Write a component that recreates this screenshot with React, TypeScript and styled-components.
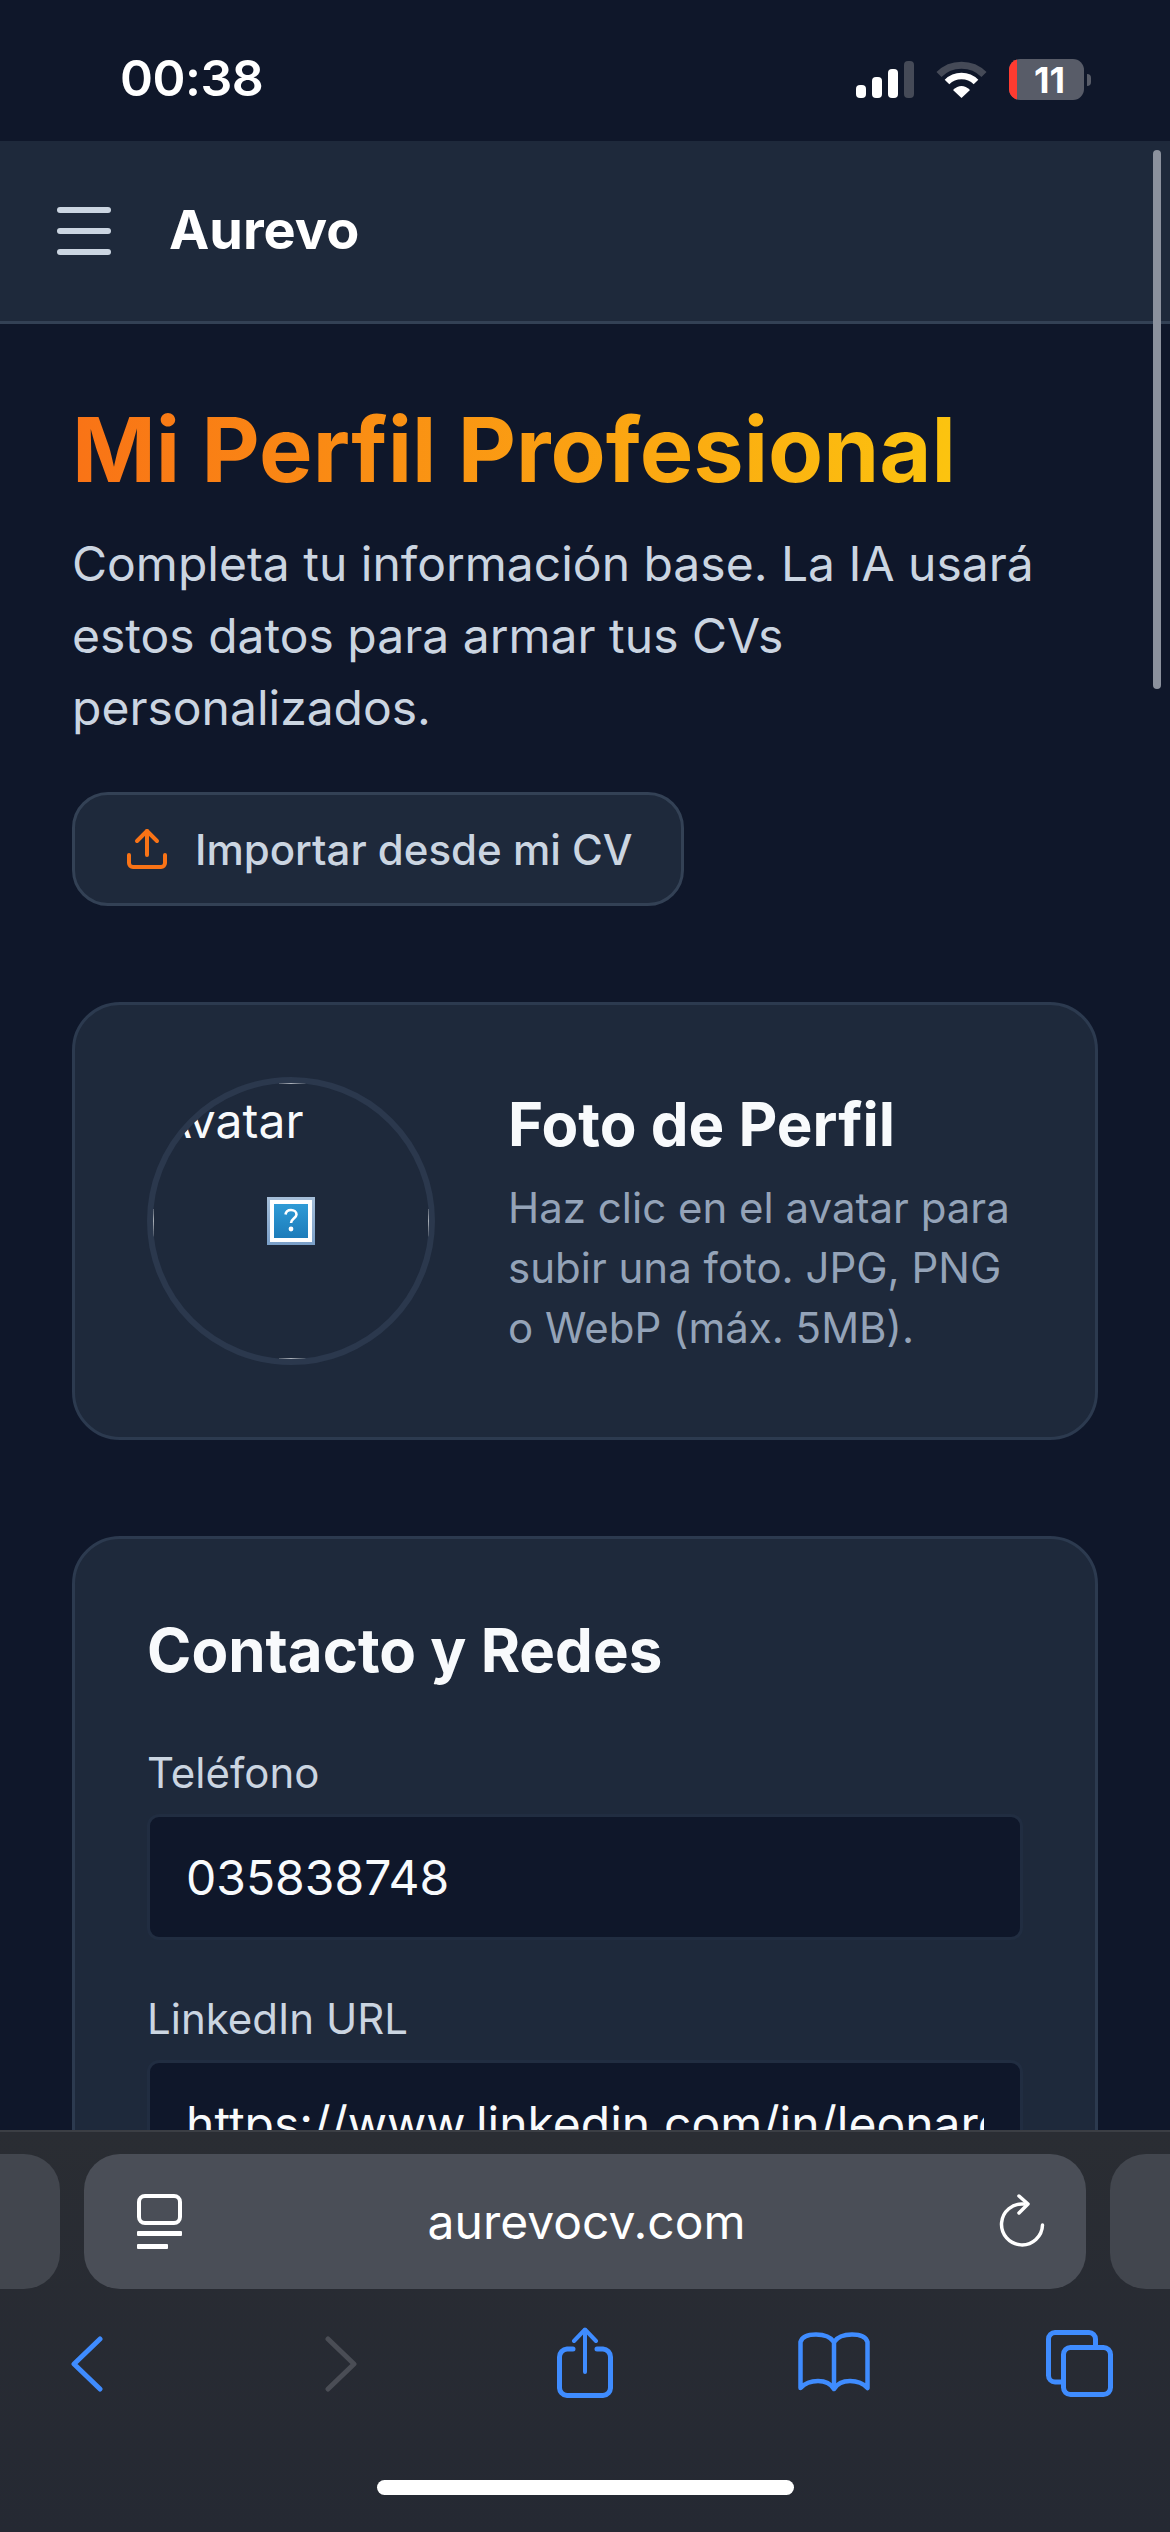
import React from 'react';
import styled, { createGlobalStyle } from 'styled-components';
import { Upload } from 'lucide-react';

const GlobalStyle = createGlobalStyle`
  * {
    box-sizing: border-box;
  }

  html,
  body {
    margin: 0;
    padding: 0;
    background: #0f172a;
  }

  body {
    font-family: Inter, "Noto Sans", sans-serif;
  }
`;

const Screen = styled.div`
  position: relative;
  width: 1170px;
  height: 2532px;
  display: flex;
  flex-direction: column;
  overflow: hidden;
  background: #0f172a;
`;

const StatusBar = styled.div`
  flex: 0 0 141px;
  display: flex;
  align-items: flex-start;
  justify-content: space-between;
  padding: 50px 79px 0 120px;
`;

const Clock = styled.span`
  color: #ffffff;
  font-size: 50px;
  font-weight: 600;
  line-height: 56px;
  letter-spacing: -0.5px;
`;

const StatusIcons = styled.div`
  display: flex;
  align-items: center;
  gap: 22px;
  padding-top: 9px;
`;

const Battery = styled.div`
  position: relative;
  width: 75px;
  height: 41px;
  display: flex;
  align-items: center;
  justify-content: center;
  border-radius: 11px;
  overflow: hidden;
  background: #585c68;
  color: #ffffff;
  font-size: 36px;
  font-weight: 700;
  padding-left: 6px;
`;

const BatteryLevel = styled.span`
  position: absolute;
  left: 0;
  top: 0;
  bottom: 0;
  width: 8px;
  background: #ff3b30;
`;

const BatteryGroup = styled.div`
  display: flex;
  align-items: center;
  gap: 3px;
`;

const BatteryNub = styled.span`
  width: 4px;
  height: 12px;
  border-radius: 0 6px 6px 0;
  background: #585c68;
`;

const Header = styled.header`
  flex: 0 0 183px;
  display: flex;
  align-items: center;
  gap: 58px;
  padding: 0 57px;
  background: #1e293b;
  border-bottom: 3px solid #334155;
`;

const MenuButton = styled.div`
  width: 54px;
  display: flex;
  flex-direction: column;
  gap: 15px;
`;

const MenuBar = styled.span`
  height: 6px;
  border-radius: 3px;
  background: #cbd5e1;
`;

const Brand = styled.span`
  color: #ffffff;
  font-size: 54px;
  font-weight: 700;
  line-height: 60px;
  margin-bottom: 2px;
`;

const Main = styled.main`
  flex: 1;
  min-height: 0;
  overflow: hidden;
  padding: 72px 72px 0;
`;

const Title = styled.h1`
  display: inline-block;
  margin: 0 0 24px;
  font-size: 90px;
  font-weight: 700;
  line-height: 108px;
  background: linear-gradient(90deg, #f97316, #fcc40f);
  -webkit-background-clip: text;
  background-clip: text;
  -webkit-text-fill-color: transparent;
`;

const Intro = styled.p`
  margin: 0 0 48px;
  color: #cbd5e1;
  font-size: 48px;
  line-height: 72px;
`;

const ImportButton = styled.button`
  height: 114px;
  display: flex;
  align-items: center;
  gap: 24px;
  margin-bottom: 96px;
  padding: 0 48px;
  border: 3px solid #334155;
  border-radius: 36px;
  background: #1e293b;
  color: #cbd5e1;
  font-family: inherit;
  font-size: 42px;
  font-weight: 500;
  svg {
    color: #f97316;
  }
`;

const Card = styled.section`
  margin-bottom: 96px;
  padding: 72px;
  border: 3px solid #2c3a4f;
  border-radius: 48px;
  background: #1e293b;
`;

const PhotoRow = styled.div`
  display: flex;
  align-items: center;
  gap: 73px;
`;

const Avatar = styled.div`
  position: relative;
  flex: 0 0 288px;
  height: 288px;
  display: flex;
  align-items: center;
  justify-content: center;
  border: 6px solid #2b384d;
  border-radius: 50%;
  overflow: hidden;
`;

const AvatarAlt = styled.span`
  position: absolute;
  left: 6px;
  top: 2px;
  color: #f8fafc;
  font-size: 48px;
  line-height: 72px;
`;

const Tick = styled.span<{ $side: 'top' | 'bottom' | 'left' | 'right' }>`
  position: absolute;
  background: #a9afb8;
  ${({ $side }) =>
    $side === 'top' || $side === 'bottom'
      ? `left: 126px; width: 30px; height: 1px; ${$side}: 0;`
      : `top: 126px; height: 30px; width: 1px; ${$side}: 0;`}
`;

const PhotoText = styled.div`
  flex: 1;
  min-width: 0;
`;

const CardTitle = styled.h2<{ $mb: number }>`
  margin: 0 0 ${({ $mb }) => $mb}px;
  color: #f8fafc;
  font-size: 60px;
  font-weight: 700;
  line-height: 78px;
`;

const PhotoHint = styled.p`
  margin: 0;
  color: #94a3b8;
  font-size: 42px;
  line-height: 60px;
`;

const Field = styled.label`
  display: block;
  margin-bottom: 47px;
`;

const FieldLabel = styled.span`
  display: block;
  margin-bottom: 10px;
  color: #cbd5e1;
  font-size: 42px;
  line-height: 63px;
`;

const TextInput = styled.input`
  display: block;
  width: 100%;
  height: 126px;
  padding: 0 36px;
  border: 3px solid #212d41;
  border-radius: 12px;
  outline: none;
  background: #0f172a;
  color: #f8fafc;
  font-family: inherit;
  font-size: 48px;
`;

const SafariBar = styled.div`
  flex: 0 0 402px;
  display: flex;
  flex-direction: column;
  border-top: 2px solid #3b3e44;
  background: linear-gradient(180deg, #2a2d33, #252933);
`;

const AddressRow = styled.div`
  display: flex;
  align-items: center;
  gap: 24px;
  margin: 22px -60px 0;
`;

const SidePill = styled.div`
  flex: 0 0 auto;
  width: 120px;
  height: 135px;
  border-radius: 36px;
  background: #42464e;
`;

const AddressPill = styled.div`
  flex: 1;
  height: 135px;
  display: flex;
  align-items: center;
  justify-content: space-between;
  padding: 0 41px 0 53px;
  border-radius: 36px;
  background: #4a4e57;
`;

const Url = styled.span`
  margin-right: 9px;
  color: #ffffff;
  font-size: 48px;
`;

const NavRow = styled.div`
  display: grid;
  grid-template-columns: repeat(5, 249px);
  justify-items: center;
  align-items: start;
  height: 100px;
  margin: 38px 0 0 -38px;
`;

const NavSlot = styled.div<{ $top: number; $shift?: number }>`
  display: flex;
  padding-top: ${({ $top }) => $top}px;
  margin-left: ${({ $shift }) => $shift ?? 0}px;
`;

const HomeIndicator = styled.div`
  width: 417px;
  height: 15px;
  margin: 53px auto 0;
  border-radius: 8px;
  background: #ffffff;
`;

const ScrollThumb = styled.div`
  position: absolute;
  top: 150px;
  right: 9px;
  width: 8px;
  height: 539px;
  border-radius: 4px;
  background: #8b919d;
`;

const SignalIcon = () => (
  <svg width="58" height="37" viewBox="0 0 58 37">
    <rect x="0" y="24" width="10" height="13" rx="4" fill="#fff" />
    <rect x="16" y="16" width="10" height="21" rx="4" fill="#fff" />
    <rect x="32" y="8" width="10" height="29" rx="4" fill="#fff" />
    <rect x="48" y="0" width="10" height="37" rx="4" fill="#454a57" />
  </svg>
);

const WifiIcon = () => (
  <svg width="51" height="37" viewBox="0 0 51 37" fill="none">
    <path d="M3 13.5C15 1 36 1 48 13.5" stroke="#454a57" strokeWidth="7" />
    <path d="M11 21C19 13 32 13 40 21" stroke="#fff" strokeWidth="6.5" />
    <path d="M17 29Q25.5 21 34 29L25.5 37Z" fill="#fff" />
  </svg>
);

const BrokenImage = () => (
  <svg width="48" height="48" viewBox="0 0 48 48">
    <defs>
      <linearGradient id="brokenFill" x1="0" y1="0" x2="0" y2="1">
        <stop offset="0" stopColor="#2f9bd6" />
        <stop offset="1" stopColor="#1c7cba" />
      </linearGradient>
      <linearGradient id="brokenEdge" x1="0" y1="0" x2="0" y2="1">
        <stop offset="0" stopColor="#a5bed8" />
        <stop offset="1" stopColor="#7a9fc8" />
      </linearGradient>
    </defs>
    <rect width="48" height="48" fill="url(#brokenEdge)" />
    <rect x="3" y="3" width="42" height="42" fill="#fff" />
    <rect x="7" y="7" width="34" height="34" fill="url(#brokenFill)" />
    <path
      d="M18.5 17.5C19 14 21.5 13 24 13C27 13 29.5 15 29.5 17.5C29.5 21 24 21.5 24 26"
      fill="none"
      stroke="#fff"
      strokeWidth="2.6"
    />
    <circle cx="24" cy="32" r="2.4" fill="#fff" />
  </svg>
);

const TabsGlyph = () => (
  <svg width="46" height="55" viewBox="0 0 46 55" fill="none">
    <rect x="2" y="2" width="41" height="27" rx="6" stroke="#fff" strokeWidth="4" />
    <rect x="0" y="37" width="45" height="5" rx="1" fill="#fff" />
    <rect x="0" y="50" width="31" height="5" rx="1" fill="#fff" />
  </svg>
);

const ReloadIcon = () => (
  <svg width="46" height="56" viewBox="0 0 46 56" fill="none" stroke="#fff" strokeWidth="3.5" strokeLinecap="round" strokeLinejoin="round">
    <path d="M25 10A20.5 20.5 0 1 0 43.5 31" />
    <path d="M20 2L29 10L20 19" />
  </svg>
);

const ChevronIcon = ({ flip, color }: { flip?: boolean; color: string }) => (
  <svg width="32" height="56" viewBox="0 0 32 56" fill="none" stroke={color} strokeWidth="5" strokeLinecap="round" strokeLinejoin="round">
    <path d={flip ? 'M3 3L29 28L3 53' : 'M29 3L3 28L29 53'} />
  </svg>
);

const ShareIcon = () => (
  <svg width="56" height="71" viewBox="0 0 56 71" fill="none" stroke="#3f8cff" strokeWidth="5" strokeLinecap="round" strokeLinejoin="round">
    <path d="M16 22H10A8 8 0 0 0 2.5 30V60A8 8 0 0 0 10 68.5H46A8 8 0 0 0 53.5 60V30A8 8 0 0 0 46 22H40" />
    <path d="M28 3V45" strokeWidth="4" />
    <path d="M17 14L28 2.5L39 14" strokeWidth="4" />
  </svg>
);

const BookIcon = () => (
  <svg width="72" height="60" viewBox="0 0 72 60" fill="none" stroke="#3f8cff" strokeWidth="4.5" strokeLinecap="round" strokeLinejoin="round">
    <path d="M36 10C32 4 26 2.5 18 2.5C10 2.5 4 5 2.5 10V56C8 50 14 49 20 49C28 49 33 52 36 57C39 52 44 49 52 49C58 49 64 50 69.5 56V10C68 5 62 2.5 54 2.5C46 2.5 40 4 36 10Z" />
    <path d="M36 10V56" />
  </svg>
);

const TabsIcon = () => (
  <svg width="67" height="67" viewBox="0 0 67 67" fill="none" stroke="#3f8cff" strokeWidth="5" strokeLinejoin="round">
    <path d="M15 52H9A6.5 6.5 0 0 1 2.5 45.5V9A6.5 6.5 0 0 1 9 2.5H43A6.5 6.5 0 0 1 49.5 9V16" />
    <rect x="17.5" y="17.5" width="47" height="47" rx="7" />
  </svg>
);

const App: React.FC = () => {
  return (
    <Screen>
      <GlobalStyle />
      <StatusBar>
        <Clock>00:38</Clock>
        <StatusIcons>
          <SignalIcon />
          <WifiIcon />
          <BatteryGroup>
            <Battery>
              <BatteryLevel />
              11
            </Battery>
            <BatteryNub />
          </BatteryGroup>
        </StatusIcons>
      </StatusBar>

      <Header>
        <MenuButton>
          <MenuBar />
          <MenuBar />
          <MenuBar />
        </MenuButton>
        <Brand>Aurevo</Brand>
      </Header>

      <Main>
        <Title>Mi Perfil Profesional</Title>
        <Intro>
          Completa tu información base. La IA usará estos datos para armar tus CVs personalizados.
        </Intro>
        <ImportButton>
          <Upload size={48} strokeWidth={2} />
          Importar desde mi CV
        </ImportButton>

        <Card>
          <PhotoRow>
            <Avatar>
              <AvatarAlt>Avatar</AvatarAlt>
              <BrokenImage />
              <Tick $side="top" />
              <Tick $side="bottom" />
              <Tick $side="left" />
              <Tick $side="right" />
            </Avatar>
            <PhotoText>
              <CardTitle $mb={15}>Foto de Perfil</CardTitle>
              <PhotoHint>Haz clic en el avatar para subir una foto. JPG, PNG o WebP (máx. 5MB).</PhotoHint>
            </PhotoText>
          </PhotoRow>
        </Card>

        <Card>
          <CardTitle $mb={52}>Contacto y Redes</CardTitle>
          <Field>
            <FieldLabel>Teléfono</FieldLabel>
            <TextInput readOnly value="035838748" />
          </Field>
          <Field>
            <FieldLabel>LinkedIn URL</FieldLabel>
            <TextInput readOnly value="https://www.linkedin.com/in/leonardo-perez" />
          </Field>
        </Card>
      </Main>

      <SafariBar>
        <AddressRow>
          <SidePill />
          <AddressPill>
            <TabsGlyph />
            <Url>aurevocv.com</Url>
            <ReloadIcon />
          </AddressPill>
          <SidePill />
        </AddressRow>
        <NavRow>
          <NavSlot $top={9}>
            <ChevronIcon color="#3f8cff" />
          </NavSlot>
          <NavSlot $top={9} $shift={10}>
            <ChevronIcon flip color="#4a4d55" />
          </NavSlot>
          <NavSlot $top={0}>
            <ShareIcon />
          </NavSlot>
          <NavSlot $top={5}>
            <BookIcon />
          </NavSlot>
          <NavSlot $top={3} $shift={-6}>
            <TabsIcon />
          </NavSlot>
        </NavRow>
        <HomeIndicator />
      </SafariBar>

      <ScrollThumb />
    </Screen>
  );
};

export default App;
